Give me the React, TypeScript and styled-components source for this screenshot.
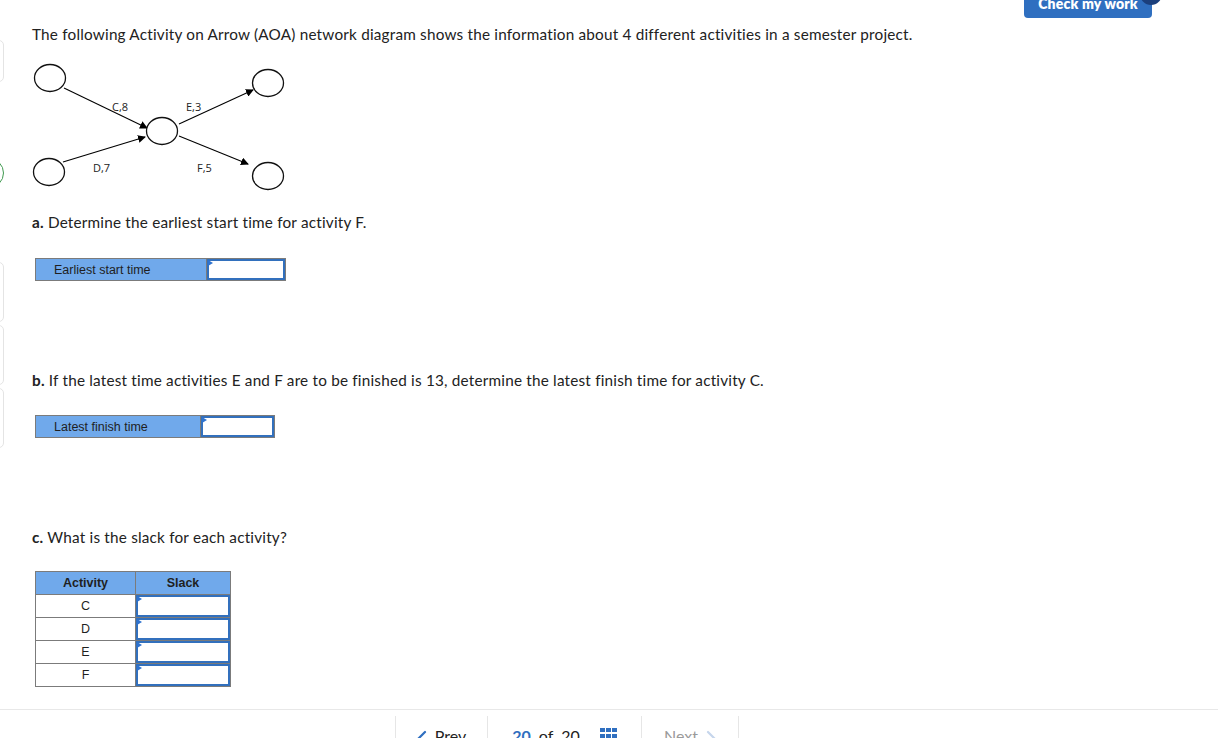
import React from 'react';
import styled, { createGlobalStyle } from 'styled-components';

const GlobalStyle = createGlobalStyle`
  html, body {
    margin: 0;
    padding: 0;
    background: #ffffff;
  }
  body {
    font-family: "Open Sans", "Liberation Sans", sans-serif;
    color: #222222;
  }
`;

const Shell = styled.div`
  width: 1218px;
  height: 738px;
  display: flex;
  flex-direction: column;
  overflow: hidden;
`;

const Body = styled.div`
  flex: 1;
  display: flex;
  min-height: 0;
`;

// sidebar that is mostly scrolled off the left edge
const Rail = styled.div`
  width: 5px;
  flex-shrink: 0;
  overflow: hidden;
  display: flex;
  flex-direction: column;
  padding-top: 40px;
`;

const RailCard = styled.div<{ $h: number; $gap: number }>`
  width: 30px;
  height: ${p => p.$h}px;
  margin-top: ${p => p.$gap}px;
  margin-left: -26px;
  border: 1px solid #e4e4e4;
  border-radius: 5px;
  box-sizing: border-box;
  flex-shrink: 0;
`;

const RailDot = styled.div`
  width: 30px;
  height: 30px;
  margin-top: 76px;
  margin-left: -26px;
  border: 1.5px solid #3f9a4f;
  border-radius: 50%;
  box-sizing: border-box;
  flex-shrink: 0;
`;

const Content = styled.div`
  flex: 1;
  padding-left: 27px;
  display: flex;
  flex-direction: column;
  align-items: flex-start;
`;

const TopBar = styled.div`
  align-self: stretch;
  height: 18px;
  display: flex;
  justify-content: flex-end;
  padding-right: 66px;
`;

const CheckButton = styled.div`
  position: relative;
  width: 128px;
  height: 36px;
  margin-top: -18px;
  background: #2f6fc0;
  border-radius: 4px;
  color: #ffffff;
  font-family: Lato, "Liberation Sans", sans-serif;
  font-weight: 800;
  font-size: 14px;
  letter-spacing: 0.2px;
  display: flex;
  align-items: center;
  justify-content: center;
  padding-top: 7px;
  box-sizing: border-box;
`;

const Badge = styled.div`
  position: absolute;
  right: -10px;
  top: 1px;
  width: 22px;
  height: 22px;
  border-radius: 50%;
  background: #1b3f7c;
`;

const Prompt = styled.p<{ $gap: number }>`
  margin: ${p => p.$gap}px 0 0 0;
  font-family: Lato, "Open Sans", sans-serif;
  font-size: 15.3px;
  line-height: 20px;
  color: #222222;
  letter-spacing: 0.2px;

  b {
    font-weight: 700;
  }
`;

const Diagram = styled.svg`
  display: block;
  margin-top: 16px;
`;

const AnswerRow = styled.div<{ $gap: number; $label: number; $input: number }>`
  display: grid;
  grid-template-columns: ${p => p.$label}px ${p => p.$input}px;
  height: 23px;
  margin: ${p => p.$gap}px 0 0 3px;
  border: 1px solid #7b7b7b;
  box-sizing: border-box;
`;

const LabelCell = styled.div`
  background: #70a9eb;
  border-right: 1px solid #7b7b7b;
  font-family: "Liberation Sans", Arial, sans-serif;
  font-size: 12.5px;
  color: #1f1f1f;
  display: flex;
  align-items: center;
  padding-left: 18px;
`;

const InputBox = styled.div`
  position: relative;
  background: #ffffff;
  border: 2px solid #3270bd;
  box-sizing: border-box;

  &::before {
    content: '';
    position: absolute;
    top: -1px;
    left: -1px;
    border-top: 3px solid transparent;
    border-bottom: 3px solid transparent;
    border-left: 5px solid #2f73cf;
  }
`;

const Table = styled.table`
  margin: 24px 0 0 3px;
  border-collapse: collapse;
  font-family: "Liberation Sans", Arial, sans-serif;
  font-size: 12.5px;
  color: #1f1f1f;
`;

const HeadCell = styled.th<{ $w: number }>`
  width: ${p => p.$w}px;
  height: 23px;
  padding: 0;
  background: #70a9eb;
  border: 1px solid #7b7b7b;
  font-weight: 700;
  text-align: center;
  box-sizing: border-box;
`;

const TextCell = styled.td`
  height: 22px;
  padding: 0;
  border: 1px solid #7b7b7b;
  text-align: center;
`;

const InputCell = styled.td`
  height: 22px;
  padding: 0;
  border: 1px solid #7b7b7b;

  ${InputBox} {
    height: 22px;
  }
`;

const Footer = styled.div`
  height: 29px;
  flex-shrink: 0;
  border-top: 1px solid #e8e8e8;
  display: flex;
  padding-left: 395px;
  padding-top: 6px;
  box-sizing: border-box;
`;

const NavItem = styled.div<{ $w: number; $last?: boolean }>`
  width: ${p => p.$w}px;
  border-left: 1px solid #e6e6e6;
  border-right: ${p => (p.$last ? '1px solid #e6e6e6' : 'none')};
  display: flex;
  align-items: flex-start;
  justify-content: center;
  gap: 8px;
  padding-top: 10px;
  font-family: Lato, "Open Sans", sans-serif;
  font-size: 16px;
  line-height: 20px;
  color: #222222;
`;

const Current = styled.span`
  color: #2f6fc0;
  font-weight: 700;
`;

const Muted = styled.span`
  color: #9a9a9a;
`;

const nodes = [
  { cx: 50, cy: 78 },
  { cx: 49, cy: 172 },
  { cx: 162, cy: 131 },
  { cx: 268, cy: 83 },
  { cx: 268, cy: 176 },
];

const arrows = [
  { x1: 64, y1: 88, x2: 147, y2: 128 },
  { x1: 63, y1: 162, x2: 145, y2: 137 },
  { x1: 179, y1: 124, x2: 253, y2: 90 },
  { x1: 179, y1: 136, x2: 248, y2: 164 },
];

const labels = [
  { x: 112, y: 111, t: 'C,8' },
  { x: 186, y: 111, t: 'E,3' },
  { x: 93, y: 172, t: 'D,7' },
  { x: 197, y: 172, t: 'F,5' },
];

const NetworkDiagram = () => (
  <Diagram width={260} height={135} viewBox="32 60 260 135">
    <defs>
      <marker id="head" markerWidth="8" markerHeight="8" refX="7" refY="4" orient="auto" markerUnits="userSpaceOnUse">
        <path d="M0,0 L8,4 L0,8 z" fill="#000" />
      </marker>
    </defs>
    {arrows.map((a, i) => (
      <line key={i} {...a} stroke="#000" strokeWidth={1.1} markerEnd="url(#head)" />
    ))}
    {nodes.map((n, i) => (
      <ellipse key={i} cx={n.cx} cy={n.cy} rx={15.5} ry={13.5} fill="#fff" stroke="#111" strokeWidth={1.3} />
    ))}
    {labels.map((l, i) => (
      <text key={i} x={l.x} y={l.y} fontFamily="'Open Sans', 'DejaVu Sans', sans-serif" fontSize={11} fill="#222">
        {l.t}
      </text>
    ))}
  </Diagram>
);

const Chevron = ({ dir, color }: { dir: 'left' | 'right'; color: string }) => (
  <svg width="10" height="16" viewBox="0 0 10 16" style={{ marginTop: 4 }}>
    <path d={dir === 'left' ? 'M8 2 L2 8 L8 14' : 'M2 2 L8 8 L2 14'} fill="none" stroke={color} strokeWidth="2.2" strokeLinecap="round" />
  </svg>
);

const GridIcon = () => (
  <svg width="17" height="17" viewBox="0 0 17 17" style={{ marginTop: 2, marginLeft: 12 }}>
    {[0, 6, 12].map(y =>
      [0, 6, 12].map(x => <rect key={`${x}-${y}`} x={x} y={y} width="5" height="4" fill="#2f6fc0" />)
    )}
  </svg>
);

const slackRows = ['C', 'D', 'E', 'F'];

export default function App() {
  return (
    <>
      <GlobalStyle />
      <Shell>
        <Body>
          <Rail>
            <RailCard $h={42} $gap={0} />
            <RailDot />
            <RailCard $h={60} $gap={74} />
            <RailCard $h={60} $gap={3} />
            <RailCard $h={60} $gap={3} />
          </Rail>
          <Content>
            <TopBar>
              <CheckButton>
                Check my work
                <Badge />
              </CheckButton>
            </TopBar>
            <Prompt $gap={6}>
              The following Activity on Arrow (AOA) network diagram shows the information about 4 different activities in a semester project.
            </Prompt>
            <NetworkDiagram />
            <Prompt $gap={17}>
              <b>a.</b> Determine the earliest start time for activity F.
            </Prompt>
            <AnswerRow $gap={26} $label={171} $input={78}>
              <LabelCell>Earliest start time</LabelCell>
              <InputBox />
            </AnswerRow>
            <Prompt $gap={89}>
              <b>b.</b> If the latest time activities E and F are to be finished is 13, determine the latest finish time for activity C.
            </Prompt>
            <AnswerRow $gap={25} $label={165} $input={73}>
              <LabelCell>Latest finish time</LabelCell>
              <InputBox />
            </AnswerRow>
            <Prompt $gap={89}>
              <b>c.</b> What is the slack for each activity?
            </Prompt>
            <Table>
              <thead>
                <tr>
                  <HeadCell $w={100}>Activity</HeadCell>
                  <HeadCell $w={95}>Slack</HeadCell>
                </tr>
              </thead>
              <tbody>
                {slackRows.map(r => (
                  <tr key={r}>
                    <TextCell>{r}</TextCell>
                    <InputCell>
                      <InputBox />
                    </InputCell>
                  </tr>
                ))}
              </tbody>
            </Table>
          </Content>
        </Body>
        <Footer>
          <NavItem $w={91}>
            <Chevron dir="left" color="#2f6fc0" />
            <span>Prev</span>
          </NavItem>
          <NavItem $w={153}>
            <Current>20</Current>
            <span>of</span>
            <span>20</span>
            <GridIcon />
          </NavItem>
          <NavItem $w={96} $last>
            <Muted>Next</Muted>
            <Chevron dir="right" color="#c6d6ec" />
          </NavItem>
        </Footer>
      </Shell>
    </>
  );
}
